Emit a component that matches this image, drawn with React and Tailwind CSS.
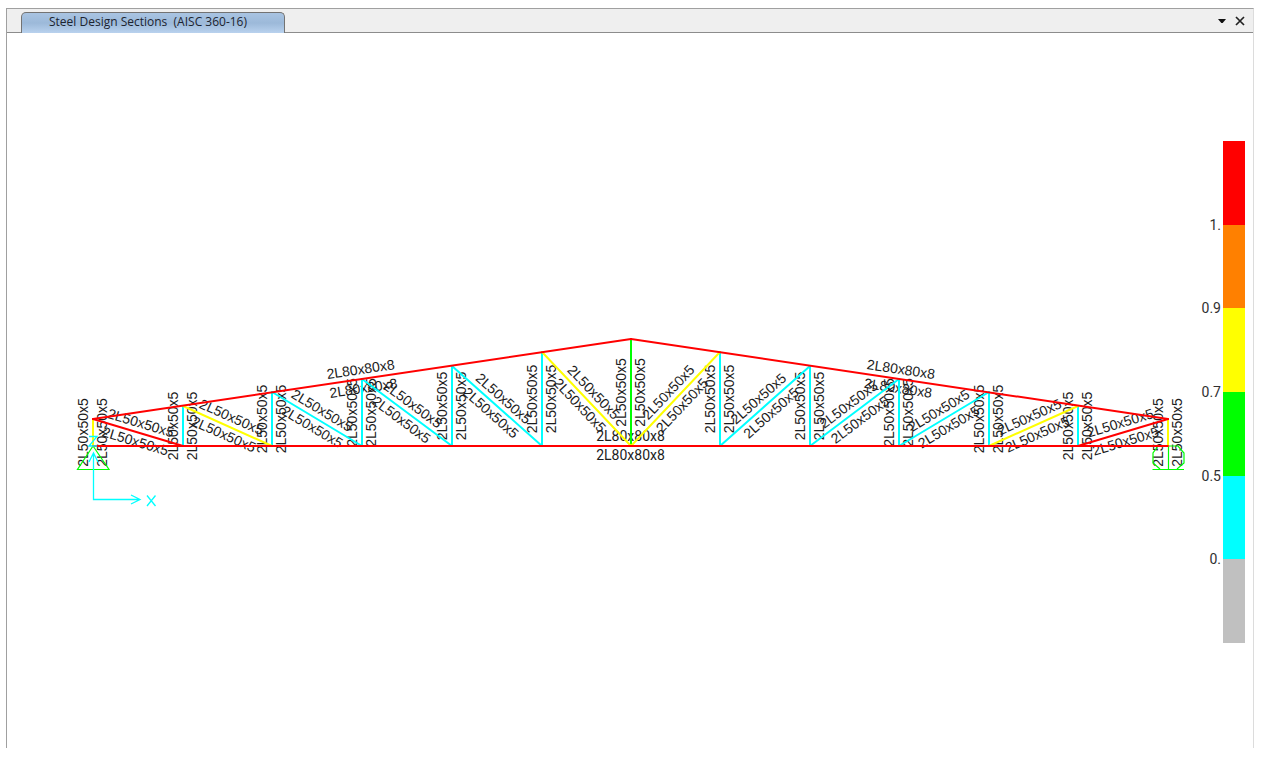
import React from "react";

const BASE_Y = 446;
const COLORS = {
  red: "#ff0000",
  yellow: "#ffff00",
  green: "#00ff00",
  cyan: "#00ffff",
};

// Panel points along the span; top chord rises from the eaves to the ridge.
const nodes = [
  { x: 93, top: 419 },
  { x: 183, top: 406 },
  { x: 272, top: 392 },
  { x: 362, top: 379 },
  { x: 452, top: 366 },
  { x: 542, top: 352 },
  { x: 631, top: 339 },
  { x: 720, top: 352 },
  { x: 810, top: 366 },
  { x: 899, top: 379 },
  { x: 989, top: 392 },
  { x: 1078, top: 406 },
  { x: 1168, top: 419 },
];

const verticalColors = [
  "yellow", "cyan", "cyan", "cyan", "cyan", "cyan", "green",
  "cyan", "cyan", "cyan", "cyan", "cyan", "yellow",
];
const diagonalColors = ["red", "yellow", "cyan", "cyan", "cyan", "yellow"];

const verticals = nodes.map((n, i) => ({
  a: [n.x, BASE_Y],
  b: [n.x, n.top],
  color: verticalColors[i],
  section: "2L50x50x5",
}));

const diagonals = diagonalColors.flatMap((color, i) => {
  const left = nodes[i];
  const leftFoot = nodes[i + 1];
  const right = nodes[12 - i];
  const rightFoot = nodes[11 - i];
  return [
    { a: [left.x, left.top], b: [leftFoot.x, BASE_Y], color, section: "2L50x50x5" },
    { a: [rightFoot.x, BASE_Y], b: [right.x, right.top], color, section: "2L50x50x5" },
  ];
});

const chords = [
  { a: [93, BASE_Y], b: [1168, BASE_Y], color: "red", section: "2L80x80x8" },
  { a: [93, 419], b: [631, 339], color: "red", section: "2L80x80x8" },
  { a: [631, 339], b: [1168, 419], color: "red", section: "2L80x80x8" },
];

const members = [...verticals, ...diagonals, ...chords];

function MemberLabels({ a, b, section }) {
  const x = (a[0] + b[0]) / 2;
  const y = (a[1] + b[1]) / 2;
  const angle = (Math.atan2(b[1] - a[1], b[0] - a[0]) * 180) / Math.PI;
  const font =
    angle === 0
      ? "font-[Roboto,sans-serif]"
      : "font-['Liberation_Sans',Arial,sans-serif]";
  return (
    <g
      transform={`translate(${x} ${y}) rotate(${angle})`}
      textAnchor="middle"
      fill="#1c1c1c"
      className={`text-[14px] ${font}`}
    >
      <text y="-5">{section}</text>
      <text y="14">{section}</text>
    </g>
  );
}

function TrussDrawing() {
  return (
    <svg
      viewBox="7 33 1192 715"
      className="block h-auto min-w-0 flex-1"
      role="img"
      aria-label="Truss design sections"
    >
      {members.map((m, i) => (
        <MemberLabels key={i} {...m} />
      ))}
      <g fill="none" stroke="#00ff00" strokeWidth="1.2">
        <path d="M93 446L77.500 469.500H109L93 446" />
        <path d="M1158 446H1178L1184 453V463L1177 469M1158 446L1153 453V463L1160 469M1152.500 469.500H1184M1168.500 446V469" />
      </g>
      <g strokeWidth="2" strokeLinecap="round">
        {members.map((m, i) => (
          <line
            key={i}
            x1={m.a[0]}
            y1={m.a[1]}
            x2={m.b[0]}
            y2={m.b[1]}
            stroke={COLORS[m.color]}
          />
        ))}
      </g>
      <g fill="none" stroke="#00ffff" strokeWidth="1.300">
        <path d="M93.500 454V499.500H140M89 462L93.500 453L98 462M131 495L140 499.500L131 504" />
        <path d="M89 436.500H97L89 446H97" />
        <path d="M147 495.500L155.500 506M155.500 495.500L147 506" />
      </g>
    </svg>
  );
}

const legend = [
  { bar: "bg-[#ff0000]", label: "1." },
  { bar: "bg-[#ff8000]", label: "0.9" },
  { bar: "bg-[#ffff00]", label: "0.7" },
  { bar: "bg-[#00ff00]", label: "0.5" },
  { bar: "bg-[#00ffff]", label: "0." },
  { bar: "bg-[#c0c0c0]", label: "" },
];

function Legend() {
  return (
    <ul className="mt-[108px] mr-2 grid h-[502px] shrink-0 grid-rows-6 font-[Roboto,sans-serif] text-[14px] leading-4 text-[#303030]">
      {legend.map((item) => (
        <li key={item.bar} className="flex gap-[2px]">
          <span className="-mb-2 w-[22px] self-end text-right">{item.label}</span>
          <span className={`w-[22px] ${item.bar}`} />
        </li>
      ))}
    </ul>
  );
}

export default function App() {
  return (
    <div className="flex min-h-screen flex-col bg-white pt-2 pr-[7px] pb-[9px] pl-[6px]">
      <div className="flex flex-1 flex-col border-t border-r border-l border-t-[#a0a0a0] border-r-[#dcdcdc] border-l-[#a0a0a0]">
        <header className="flex h-6 shrink-0 items-end justify-between border-b border-[#8c8c8c] bg-[#efefef] pr-[5px] pl-[14px]">
          <button
            type="button"
            className="-mb-px h-[21px] w-[264px] rounded-t-[5px] border border-b-0 border-[#737373] bg-linear-to-b from-[#a9c4e2] via-[#9cb9d9] to-[#b9d2ee] pb-[2px] pl-[27px] text-left font-['Open_Sans','Noto_Sans',sans-serif] text-[12px] leading-[18px] whitespace-pre text-[#1c2430]"
          >
            {"Steel Design Sections  (AISC 360-16)"}
          </button>
          <div className="flex h-full items-center gap-0.5 pt-px">
            <button type="button" aria-label="Window list" className="flex size-4 items-center justify-center">
              <svg width="10" height="6" viewBox="0 0 10 6" aria-hidden="true">
                <path d="M1 1H9L5.700 5H4.300Z" fill="#111" />
              </svg>
            </button>
            <button type="button" aria-label="Close" className="flex size-4 items-center justify-center">
              <svg width="10" height="10" viewBox="0 0 10 10" aria-hidden="true">
                <path d="M1 1L9 9M9 1L1 9" stroke="#222" strokeWidth="1.700" />
              </svg>
            </button>
          </div>
        </header>
        <main className="flex flex-1 items-start">
          <TrussDrawing />
          <Legend />
        </main>
      </div>
    </div>
  );
}
